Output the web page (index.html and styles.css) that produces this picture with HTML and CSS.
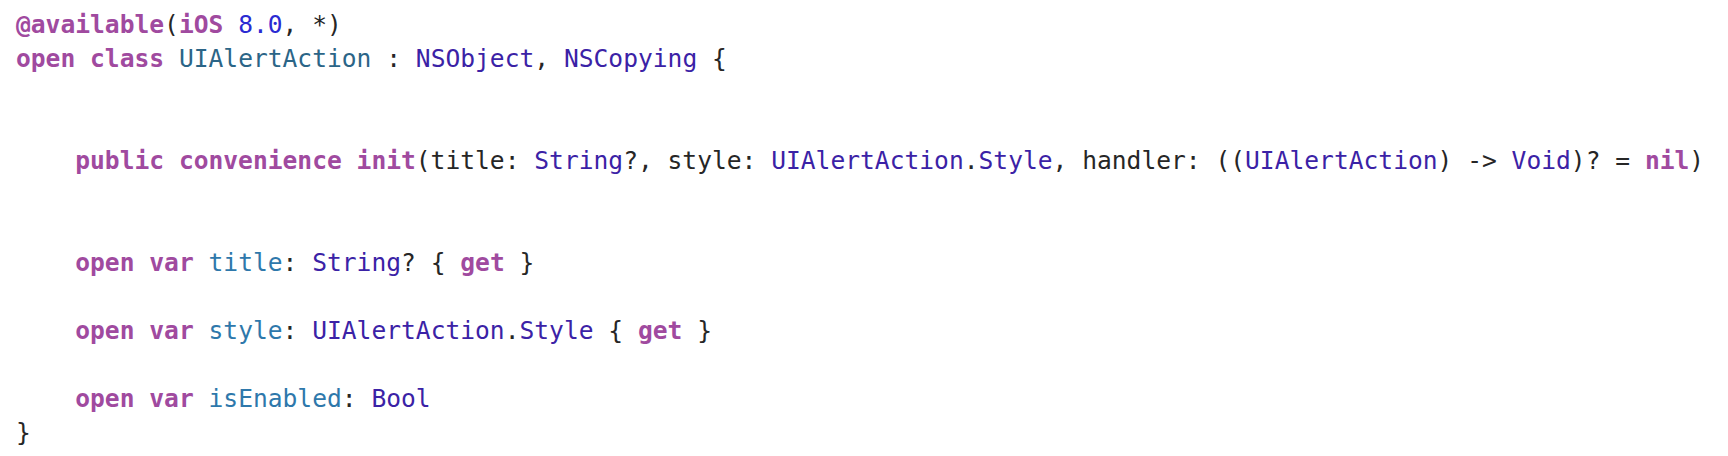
FILE: index.html
```html
<!DOCTYPE html>
<html>
<head>
<meta charset="utf-8">
<link rel="stylesheet" href="styles.css">
</head>
<body>
<div class="code">
<div class="line"><span class="kw">@available</span>(<span class="kw">iOS</span> <span class="num">8.0</span>, *)</div>
<div class="line"><span class="kw">open</span> <span class="kw">class</span> <span class="decl">UIAlertAction</span> : <span class="type">NSObject</span>, <span class="type">NSCopying</span> {</div>
<div class="line"> </div>
<div class="line"> </div>
<div class="line">    <span class="kw">public</span> <span class="kw">convenience</span> <span class="kw">init</span>(title: <span class="type">String</span>?, style: <span class="type">UIAlertAction</span>.<span class="type">Style</span>, handler: ((<span class="type">UIAlertAction</span>) -&gt; <span class="type">Void</span>)? = <span class="kw">nil</span>)</div>
<div class="line"> </div>
<div class="line"> </div>
<div class="line">    <span class="kw">open</span> <span class="kw">var</span> <span class="prop">title</span>: <span class="type">String</span>? { <span class="kw">get</span> }</div>
<div class="line"> </div>
<div class="line">    <span class="kw">open</span> <span class="kw">var</span> <span class="prop">style</span>: <span class="type">UIAlertAction</span>.<span class="type">Style</span> { <span class="kw">get</span> }</div>
<div class="line"> </div>
<div class="line">    <span class="kw">open</span> <span class="kw">var</span> <span class="prop">isEnabled</span>: <span class="type">Bool</span></div>
<div class="line">}</div>
</div>
</body>
</html>
```
FILE: styles.css
```css
html, body {
  margin: 0;
  padding: 0;
  background: #ffffff;
}
.code {
  padding: 8px 0 0 16px;
  font-family: "DejaVu Sans Mono", "Liberation Mono", monospace;
  font-size: 24.6px;
  line-height: 34px;
  color: #262626;
}
.line {
  white-space: pre;
  height: 34px;
}
.kw {
  color: #a04a9f;
  font-weight: bold;
}
.num {
  color: #2a2ad2;
}
.decl {
  color: #2b6587;
}
.type {
  color: #3b22a6;
}
.prop {
  color: #2e78ab;
}
```
